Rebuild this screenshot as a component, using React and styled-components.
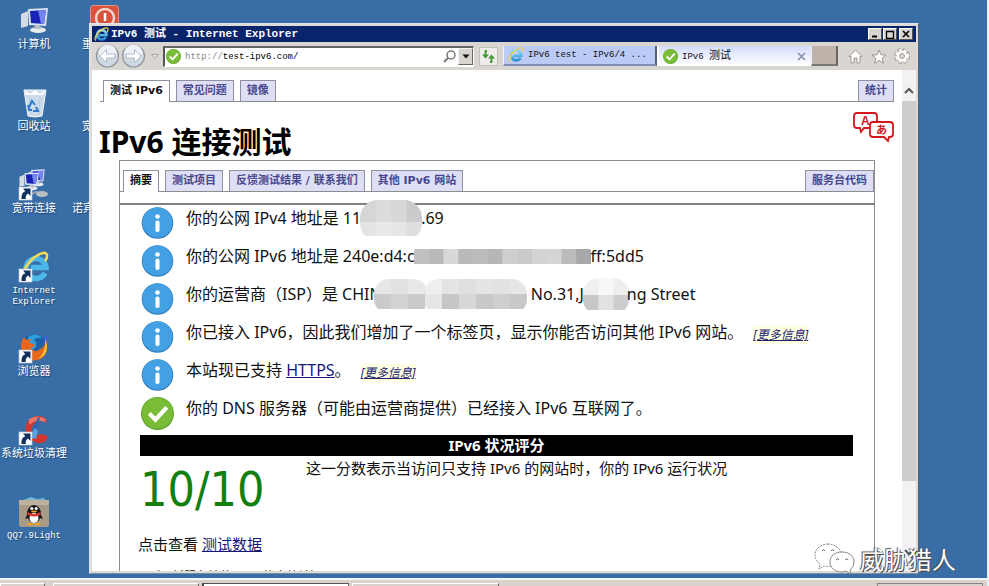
import React from "react";
import styled, { createGlobalStyle, css } from "styled-components";

const sans = '"Noto Sans", "Noto Sans CJK SC", sans-serif';
const tabSans = '"DejaVu Sans", "Noto Sans CJK SC", sans-serif';
const mono = '"Liberation Mono", "Noto Sans CJK SC", monospace';

const GlobalStyle = createGlobalStyle`
  * { box-sizing: border-box; }
  html, body, #root { height: 100%; }
  body { margin: 0; overflow: hidden; font-family: ${sans}; color: #111; }
  button, input { font: inherit; color: inherit; padding: 0; border: 0; }
  button { cursor: default; }
  svg { display: block; flex: none; }
`;

/* ---------- desktop ---------- */

const Screen = styled.div`
  height: 100%;
  display: flex;
  flex-direction: column;
  background: #396da5;
  border-right: 2px solid #e4f4f4;
`;
const Desktop = styled.main`
  position: relative;
  flex: 1;
  min-height: 0;
  display: flex;
  overflow: hidden;
`;
const IconColumn = styled.div`
  width: 68px;
  padding-top: 5px;
  display: flex;
  flex-direction: column;
`;
const Shortcut = styled.button`
  height: 82px;
  background: none;
  color: #fff;
  display: flex;
  flex-direction: column;
  align-items: ${(p) => (p.$left ? "flex-start" : "center")};
  padding-left: ${(p) => p.$left || 0}px;
  gap: 2px;
  white-space: nowrap;
`;
const ShortcutLabel = styled.span`
  font: ${(p) => (p.$latin ? "9px/11px" : "11px/15px")} ${mono};
  padding-top: ${(p) => (p.$latin ? 2 : 0)}px;
  white-space: pre;
  text-align: center;
  text-shadow: 1px 1px 1px #1d4470;
`;
const IconSpace = styled.span`
  height: 31px;
  padding-left: ${(p) => p.$indent || 0}px;
`;

/* ---------- window ---------- */

const Window = styled.section`
  position: absolute;
  inset: 23px 68px 4px 89px;
  display: flex;
  flex-direction: column;
  border: 1px solid #dfe7ef;
  border-right-color: #55606c;
  border-bottom-color: #7d8fa3;
  box-shadow: inset 0 0 0 2px #dedad5;
  padding: 2px;
  background: #fff;
`;
const TitleBar = styled.header`
  height: 16px;
  display: flex;
  align-items: center;
  gap: 2px;
  padding: 0 3px 0 2px;
  background: #08246b;
  color: #fff;
`;
const TitleText = styled.h2`
  flex: 1;
  margin: 0;
  font: bold 11px/16px ${mono};
`;
const WindowButton = styled.button`
  width: 14px;
  height: 12px;
  margin-left: ${(p) => (p.$apart ? 1 : 0)}px;
  background: #d8d4ce;
  border: 1px solid #fff;
  border-right-color: #555;
  border-bottom-color: #555;
  display: grid;
  place-items: center;
`;
const WindowButtons = styled.div`
  display: flex;
  gap: 1px;
`;
const Toolbar = styled.div`
  height: 28px;
  display: flex;
  align-items: center;
  padding: 0 3px 0 2px;
  background: #d9d5d1;
  font: 9px/20px ${mono};
`;
const PlainButton = styled.button`
  background: none;
  width: ${(p) => p.$w}px;
  display: grid;
  place-items: center;
`;
const AddressBox = styled.label`
  flex: 1;
  min-width: 0;
  height: 21px;
  margin: 0 5px 0 0;
  display: flex;
  align-items: center;
  background: #fff;
  border: 1px solid #fff;
  border-top: 2px solid #666;
  border-left: 2px solid #555;
  padding-left: 1px;
  color: #888;
`;
const AddressInput = styled.input`
  flex: 1;
  min-width: 0;
  background: none;
  color: #000;
  outline: 0;
`;
const AddressScheme = styled.span`
  margin-left: 4px;
`;
const DropButton = styled.button`
  width: 15px;
  height: 17px;
  margin-left: 2px;
  background: #d8d4ce;
  border: 1px solid #f4f4f4;
  border-right-color: #666;
  border-bottom-color: #666;
  display: grid;
  place-items: center;
`;
const RefreshButton = styled.button`
  width: 19px;
  height: 19px;
  margin-right: 5px;
  background: #eeedeb;
  border: 1px solid #c4c0bc;
  display: grid;
  place-items: center;
`;
const BrowserTab = styled.button`
  width: 154px;
  height: 20px;
  display: flex;
  align-items: center;
  gap: 4px;
  padding: 0 5px 0 4px;
  text-align: left;
  white-space: pre;
  color: #111;
  ${(p) =>
    p.$active
      ? css`
          background: linear-gradient(#d3dcfc, #eff2ff 60%, #fff);
          border-left: 2px solid #fff;
        `
      : css`
          background: #bccbf6;
          border-left: 1px solid #eef2ff;
          border-right: 2px solid #555e78;
          border-bottom: 2px solid #8090b8;
        `}
`;
const TabName = styled.span`
  flex: 1;
`;
const TabCjk = styled.span`
  font-size: 11px;
`;
const NewTab = styled.button`
  width: 27px;
  height: 20px;
  background: #bdb3ab;
  border-left: 1px solid #eee;
  border-right: 2px solid #666;
  border-bottom: 2px solid #777;
  margin-right: 6px;
`;

const Viewport = styled.div`
  flex: 1;
  min-height: 0;
  display: flex;
`;
const Page = styled.div`
  flex: 1;
  min-width: 0;
  overflow: hidden;
  padding-top: 10px;
`;
const ScrollBar = styled.div`
  width: 14px;
  display: flex;
  flex-direction: column;
  background: #f4f1f4;
`;
const ScrollArrow = styled.button`
  height: ${(p) => p.$h}px;
  background: none;
  display: grid;
  place-items: ${(p) => (p.$down ? "center" : "end center")};
  padding-bottom: ${(p) => (p.$down ? 0 : 7)}px;
`;
const ScrollTrack = styled.div`
  flex: 1;
`;
const ScrollThumb = styled.div`
  height: 88%;
  background: #cecdce;
`;

/* ---------- page ---------- */

const TabRow = styled.nav`
  display: flex;
  gap: 6px;
  padding-left: 3px;
  height: 22px;
  margin: ${(p) => (p.$outer ? "0 8px 0 8px" : "9px 0 0")};
  border-bottom: 1px solid #8d8d8d;
`;
const PageTab = styled.a`
  height: ${(p) => (p.$active ? 22 : 21)}px;
  padding: 0 6px;
  border: 1px solid #8f8fa4;
  border-bottom: 0;
  background: ${(p) => (p.$active ? "#fff" : "#dedef5")};
  color: ${(p) => (p.$active ? "#111" : "#47478f")};
  font: bold 11px/20px ${tabSans};
  text-decoration: none;
  white-space: nowrap;
  margin-left: ${(p) => (p.$end ? "auto" : 0)};
`;
const Heading = styled.div`
  height: 58px;
  padding: 10px 8px 0 7px;
  display: flex;
  justify-content: space-between;
`;
const Title = styled.h1`
  margin: 0;
  padding-top: 12px;
  font: bold 30px/36px ${sans};
  color: #000;
`;
const Panel = styled.section`
  margin: 0 27px;
  min-height: 100%;
  border: 1px solid #8d8d8d;
`;
const Results = styled.ul`
  list-style: none;
  margin: 11px 0 0;
  padding: 2px 0 0 21px;
  border-top: 2px solid #808080;
`;
const Result = styled.li`
  height: 38px;
  display: flex;
  gap: 12px;
`;
const ResultText = styled.span`
  height: 24px;
  display: flex;
  align-items: center;
  font: 16px/24px ${sans};
  white-space: pre;
  margin-top: -1px;
`;
const Link = styled.a`
  color: #17177a;
`;
const MoreLink = styled.a`
  align-self: flex-end;
  margin-left: 10px;
  font: italic 12px/18px ${sans};
  color: #22226e;
  background: #ffffe2;
`;
const ScoreTitle = styled.h3`
  margin: 0 21px 0 20px;
  background: #000;
  color: #fff;
  text-align: center;
  font: bold 15px/21px ${sans};
`;
const ScoreRow = styled.div`
  height: 71px;
  display: flex;
  padding-left: 20px;
`;
const Score = styled.div`
  width: 166px;
  color: #118011;
  font: 48px/66px "DejaVu Sans Condensed", "DejaVu Sans", sans-serif;
`;
const Text = styled.p`
  margin: 0;
  padding: ${(p) => (p.$below ? "6px 0 0 18px" : "1px 0 0")};
  font: 15px/22px ${sans};
`;
const Note = styled.p`
  margin: 13px 0 0 28px;
  font: 12px/18px ${sans};
`;

/* ---------- watermark and taskbar ---------- */

const Watermark = styled.div`
  position: absolute;
  right: 31px;
  bottom: 3px;
  display: flex;
  align-items: center;
  gap: 5px;
  color: #fff;
  font: 24px/30px "Noto Sans CJK SC", sans-serif;
  text-shadow: -1px -1px 1px #555, 1px 1px 0 #444;
`;
const Taskbar = styled.footer`
  height: 8px;
  display: flex;
  gap: 3px;
  padding-top: 3px;
  background: #d8d1cc;
  border-top: 2px solid #f4f7fa;
`;
const Task = styled.button`
  width: ${(p) => p.$w}px;
  margin-right: ${(p) => p.$gap || 0}px;
  background: ${(p) => (p.$active ? "#fff" : "#d8d1cc")};
  border-top: 1px solid ${(p) => (p.$active ? "#555" : "#fff")};
  border-left: ${(p) => (p.$active ? 2 : 1)}px solid ${(p) => (p.$active ? "#444" : "#fff")};
  border-right: 1px solid #666;
`;
const Tray = styled.div`
  width: 106px;
  margin: 0 4px 0 auto;
  border: 1px solid #8a8580;
  border-bottom: 0;
`;

/* ---------- drawings ---------- */

const IeLogo = ({ size }) => (
  <svg width={size} height={size} viewBox="0 0 32 32" aria-hidden="true">
    <defs>
      <linearGradient id="ie" x1="0" y1="0" x2="0" y2="1">
        <stop offset="0" stopColor="#8edcf8" />
        <stop offset="1" stopColor="#2a8fd4" />
      </linearGradient>
    </defs>
    <path d="M25 22 A10 10 0 1 1 26.5 17.5 H11" fill="none" stroke="url(#ie)" strokeWidth="5.5" />
    <path d="M4 29 C-1 25 6 12 16 6 C23 1 31 0 30 6 C29.800 8 29 9.500 28 11" fill="none" stroke="#f1cf45" strokeWidth="2.600" />
    <path d="M5 26 C5 20 10 12 17 8" fill="none" stroke="#fff2a8" strokeWidth="1" />
  </svg>
);

const Arrow = () => (
  <g>
    <rect x="1" y="18" width="13" height="13" fill="#fff" stroke="#b9c6d6" strokeWidth=".7" />
    <path d="M5 19.500h7.500v7.500l-2.400-2.400c-1.900 1-2.700 2.700-2.300 5.300H3.500c-.3-4 .8-6.500 3.800-7.600z" fill="#12315f" />
  </g>
);

const IeShortcut = () => (
  <svg width="32" height="32" viewBox="0 0 32 32" aria-hidden="true">
    <path d="M27 22 A10 10 0 1 1 28 16.500 H13" fill="none" stroke="#4cb8ea" strokeWidth="5.500" />
    <path d="M5 25C6 14 17 4 25 2c5-1 5 4 2 8" fill="none" stroke="#f0d956" strokeWidth="2.600" />
    <Arrow />
  </svg>
);

const Monitor = ({ x = 0, y = 0, s = 1 }) => (
  <g transform={`translate(${x} ${y}) scale(${s})`}>
    <path d="M2 8l7-3v15l-7 2z" fill="#d5dbe2" />
    <path d="M9 3l20-1-2 18-17-1z" fill="#d9e2f2" />
    <path d="M11 5l16-1-2 14-13-1z" fill="#1b23b4" />
    <path d="M19 4.500l8-.5-2 14-3-.2z" fill="#7484ee" />
    <ellipse cx="19" cy="24" rx="8" ry="3" fill="#e8ecef" />
    <path d="M16 19h5l1 4h-7z" fill="#b8c0c8" />
  </g>
);

const Computer = () => (
  <svg width="30" height="31" viewBox="0 0 30 31" aria-hidden="true"><Monitor y={1} /></svg>
);

const RecycleBin = () => (
  <svg width="30" height="31" viewBox="0 0 30 31" aria-hidden="true">
    <path d="M5 3h22l-4 26q-7 2-14 0z" fill="#dce7f1" fillOpacity=".9" stroke="#f4f8fc" />
    <path d="M6 3l5 4 5-4 5 4 5-4-2 5H7z" fill="#fff" />
    <path d="M11 9l1 18M21 9l-1 18" stroke="#b8c9da" />
    <path d="M10 20l3-6 3 4M17 20l2 4h-5M9 18l1 5h3" fill="none" stroke="#2f7ad0" strokeWidth="2" />
  </svg>
);

const Broadband = () => (
  <svg width="32" height="32" viewBox="0 0 32 32" aria-hidden="true">
    <Monitor x={7} y={-1} s={0.68} />
    <Monitor x={0} y={2} s={0.72} />
    <path d="M14 25q6-4 8 0" fill="none" stroke="#9aa6b0" strokeWidth="2" />
    <ellipse cx="24" cy="25" rx="6" ry="3" fill="#b9c0c4" />
    <Arrow />
  </svg>
);

const Firefox = () => (
  <svg width="32" height="32" viewBox="0 0 32 32" aria-hidden="true">
    <circle cx="16" cy="15" r="13" fill="#1f5fa8" />
    <path d="M11 4q8-4 13 2-6-1-8 2 5 4 0 9-6 3-10-2z" fill="#2f9fdb" />
    <path d="M27 7c4 8 2 19-7 21-9 2-17-4-17-13q0-6 3-10l2 3 5-1-2 4q5 0 6 3l-4 2q3 5 8 2c5-3 7-6 6-11z" fill="#e8671d" />
    <path d="M27 7c4 8 2 17-7 20 6-5 8-12 7-20z" fill="#ffc92e" />
    <Arrow />
  </svg>
);

const Cleaner = () => (
  <svg width="32" height="32" viewBox="0 0 32 32" aria-hidden="true">
    <path d="M29 9q-1-8-10-7C10 3 6 11 8 18s9 12 15 11q6-1 7-7l-7-2q-5 3-8-2t3-10l6-1z" fill="#d2362e" />
    <path d="M11 5q8-5 17 0l-1 3q-9-3-16 3z" fill="#ec7468" />
    <path d="M20 3l2 1-4 14-5 3z" fill="#2a65b0" />
    <path d="M17 14l3 3-2 8-7-2z" fill="#5b9fe0" />
    <Arrow />
  </svg>
);

const Penguin = () => (
  <svg width="32" height="31" viewBox="0 0 32 31" aria-hidden="true">
    <path d="M5 4l8-3 6 2 7-1 2 3H5z" fill="#6fb7d2" />
    <rect x="1" y="4" width="30" height="27" rx="2" fill="#a79a87" />
    <path d="M1 4h30v5H1z" fill="#beb29f" />
    <ellipse cx="16" cy="18" rx="7" ry="9" fill="#15151a" />
    <path d="M10 17l-3 6 3-1zM22 17l3 6-3-1z" fill="#15151a" />
    <ellipse cx="16" cy="22" rx="4.500" ry="5" fill="#fff" />
    <path d="M9.500 16q6.500 4 13 0v3q-6 3-13 0z" fill="#d8352b" />
    <circle cx="13.800" cy="12.500" r="1.600" fill="#fff" /><circle cx="18.200" cy="12.500" r="1.600" fill="#fff" />
    <ellipse cx="16" cy="15.500" rx="3" ry="1" fill="#f4a224" />
    <path d="M10 27h5v2h-6zM17 27h5l1 2h-6z" fill="#f4a224" />
  </svg>
);

const Power = () => (
  <svg width="30" height="31" viewBox="0 0 30 31" aria-hidden="true">
    <rect x=".5" y=".5" width="28" height="28" rx="3" fill="#d9523c" stroke="#e99382" />
    <circle cx="15" cy="13" r="9" fill="none" stroke="#f6d5cc" strokeWidth="2.500" />
    <path d="M15 8v8" stroke="#fff" strokeWidth="2.500" />
  </svg>
);

const NavCircle = ({ flip }) => (
  <svg width="25" height="24" viewBox="0 0 25 24" aria-hidden="true">
    <circle cx="12.500" cy="12" r="11" fill="#d0d8e1" stroke="#8d959e" strokeWidth="1.200" />
    <path d="M3 10a9.500 9.500 0 0 1 19 0q-9 4-19 0z" fill="#eef1f5" />
    <path
      d="M11.500 5.500L5 12l6.500 6.500V14H20v-4h-8.500z"
      transform={flip ? "translate(25 0) scale(-1 1)" : undefined}
      fill="#fff" stroke="#a9b8c8" strokeWidth=".9"
    />
  </svg>
);

const Check = ({ size }) => (
  <svg width={size} height={size} viewBox="0 0 32 32" aria-hidden="true">
    <circle cx="16" cy="16" r="16" fill="#62a52c" />
    <circle cx="16" cy="15.500" r="15" fill="#79bd36" />
    <path d="M8 16l6 6 11-12" fill="none" stroke="#fff" strokeWidth="4" />
  </svg>
);

const Info = () => (
  <svg width="33" height="32" viewBox="0 0 32 32" role="img" aria-label="信息">
    <circle cx="16" cy="16" r="15.800" fill="#3584c4" />
    <circle cx="16" cy="15.500" r="15" fill="#42a0e3" />
    <circle cx="16" cy="9.500" r="2.300" fill="#fff" />
    <rect x="14" y="13.500" width="4" height="11.500" rx="1.800" fill="#fff" />
  </svg>
);

const Magnifier = () => (
  <svg width="13" height="13" viewBox="0 0 13 13" aria-hidden="true">
    <circle cx="8" cy="5" r="4" fill="none" stroke="#777" strokeWidth="1.500" />
    <path d="M5 8l-4 4" stroke="#777" strokeWidth="2" />
  </svg>
);

const Refresh = () => (
  <svg width="13" height="13" viewBox="0 0 13 13" aria-hidden="true">
    <path d="M5 1H3.500v4M8 12h1.500V8" fill="none" stroke="#3f9a34" strokeWidth="1.800" />
    <path d="M0 4.500h7L3.500 8.500zM6 8.500h7L9.500 4.500z" fill="#3f9a34" />
  </svg>
);

const Home = () => (
  <svg width="15" height="15" viewBox="0 0 15 15" aria-hidden="true">
    <path d="M7.500 1L14 7.500h-2V14H9V9H6v5H3V7.500H1z" fill="#fff" stroke="#9b9793" />
  </svg>
);
const Star = () => (
  <svg width="16" height="15" viewBox="0 0 16 15" aria-hidden="true">
    <path d="M8 1l1.900 4.700 5.100.4-3.900 3.200 1.300 5L8 11.500l-4.400 2.800 1.300-5L1 6.100l5.100-.4z" fill="#fff" stroke="#9b9793" />
  </svg>
);
const Gear = () => (
  <svg width="16" height="16" viewBox="0 0 16 16" aria-hidden="true">
    <circle cx="8" cy="8" r="6.200" fill="none" stroke="#9b9793" strokeWidth="3.400" strokeDasharray="3 1.870" />
    <circle cx="8" cy="8" r="6" fill="none" stroke="#fff" strokeWidth="2" strokeDasharray="2.500 2.370" />
    <circle cx="8" cy="8" r="4" fill="none" stroke="#fff" strokeWidth="2.500" />
    <circle cx="8" cy="8" r="2.500" fill="#d9d5d1" stroke="#9b9793" strokeWidth=".8" />
  </svg>
);

const Translate = () => (
  <svg width="41" height="31" viewBox="0 0 41 31" role="img" aria-label="语言">
    <g fill="#fff" stroke="#d3181d" strokeWidth="1.800">
      <path d="M4 1h17q3 0 3 3v9q0 3-3 3H11l-3 4-1-4H4q-3 0-3-3V4q0-3 3-3z" />
      <path d="M20 10h17q3 0 3 3v9q0 3-3 3h-1l-1 4-4-4H20q-3 0-3-3v-9q0-3 3-3z" />
    </g>
    <text x="8" y="13" fontFamily="Liberation Sans" fontSize="12" fontWeight="bold" fill="#d3181d">A</text>
    <text x="23" y="22" fontFamily="Noto Sans CJK JP" fontSize="11" fontWeight="bold" fill="#d3181d">あ</text>
  </svg>
);

const Chevron = ({ down }) => (
  <svg width="10" height="7" viewBox="0 0 10 7" aria-hidden="true">
    <path d={down ? "M1 1l4 4 4-4" : "M1 6l4-4 4 4"} fill="none" stroke="#555" strokeWidth="2" />
  </svg>
);

const Caret = ({ color = "#111", hollow }) => (
  <svg width="8" height="5" viewBox="0 0 8 5" aria-hidden="true">
    <path d="M.5.500h7L4 4.500z" fill={hollow ? "#e8e5e2" : color} stroke={hollow ? "#aaa5a0" : "none"} />
  </svg>
);

const WeChat = () => (
  <svg width="41" height="32" viewBox="0 0 41 32" aria-hidden="true">
    <g fill="#fff" stroke="#888" strokeWidth="1" strokeDasharray="2 1">
      <path d="M14 1C7 1 1 6 1 12q0 5 5 9l-1 5 5-3q4 1 8 0 9-2 9-11C27 6 21 1 14 1z" />
      <path d="M28 9c-7 0-12 4-12 10s5 10 12 10l4-1 5 3-1-4q4-3 4-8c0-6-5-10-12-10z" strokeDasharray="none" />
    </g>
    <g fill="none" stroke="#666">
      <path d="M8 8q2-3 3 0M17 8q2-3 3 0M22 17q2-3 3 0M31 17q2-3 3 0" />
    </g>
  </svg>
);

/* Pixelated cover: rows of grey tiles clipped to a rounded outline. */
const Cover = styled.svg`
  margin: 0 ${(p) => p.$after || 0}px 0 ${(p) => p.$before || 0}px;
`;
const Mosaic = ({ id, width, height, pills, rows, split, before, after }) => (
  <Cover width={width} height={height} $before={before} $after={after} aria-hidden="true">
    <clipPath id={id}>
      {pills.map(([x, w, r]) => <rect key={x} x={x} width={w} height={height + 5} rx={r} />)}
    </clipPath>
    <g clipPath={`url(#${id})`}>
      {rows.map((tiles, r) =>
        tiles.map((c, i) => (
          <rect
            key={`${r}-${i}`}
            x={(i * width) / tiles.length}
            y={r ? split : 0}
            width={width / tiles.length + 1}
            height={r ? height - split : split}
            fill={c}
          />
        ))
      )}
    </g>
  </Cover>
);

const shortcuts = [
  ["计算机", Computer],
  ["回收站", RecycleBin],
  ["宽带连接", Broadband],
  ["Internet\nExplorer", IeShortcut, true],
  ["浏览器", Firefox],
  ["系统垃圾清理", Cleaner],
  ["QQ7.9Light", Penguin, true],
];

export default function App() {
  return (
    <Screen>
      <GlobalStyle />
      <Desktop>
        <IconColumn>
          {shortcuts.map(([name, Icon, latin]) => (
            <Shortcut key={name}>
              <IconSpace><Icon /></IconSpace>
              <ShortcutLabel $latin={latin}>{name}</ShortcutLabel>
            </Shortcut>
          ))}
        </IconColumn>
        <IconColumn>
          <Shortcut $left={14}>
            <IconSpace $indent={8}><Power /></IconSpace>
            <ShortcutLabel>重</ShortcutLabel>
          </Shortcut>
          <Shortcut $left={14}>
            <IconSpace />
            <ShortcutLabel>宽</ShortcutLabel>
          </Shortcut>
          <Shortcut $left={4}>
            <IconSpace />
            <ShortcutLabel>诺宾</ShortcutLabel>
          </Shortcut>
        </IconColumn>

        <Window aria-label="Internet Explorer">
          <TitleBar>
            <IeLogo size={15} />
            <TitleText>IPv6 测试 - Internet Explorer</TitleText>
            <WindowButtons>
              <WindowButton aria-label="最小化">
                <svg width="8" height="8"><path d="M1 6.500h5" stroke="#000" strokeWidth="2" /></svg>
              </WindowButton>
              <WindowButton aria-label="最大化">
                <svg width="10" height="9"><path d="M1 1.500h8M1.500 1v7.500h7V1" fill="none" stroke="#000" strokeWidth="1.300" /></svg>
              </WindowButton>
              <WindowButton $apart aria-label="关闭">
                <svg width="8" height="8"><path d="M1 1l6 6M7 1L1 7" stroke="#000" strokeWidth="1.600" /></svg>
              </WindowButton>
            </WindowButtons>
          </TitleBar>

          <Toolbar>
            <PlainButton $w={26} aria-label="后退"><NavCircle /></PlainButton>
            <PlainButton $w={26} aria-label="前进"><NavCircle flip /></PlainButton>
            <PlainButton $w={17} aria-label="历史"><Caret hollow /></PlainButton>
            <AddressBox>
              <Check size={15} />
              <AddressScheme>http://</AddressScheme>
              <AddressInput aria-label="地址" defaultValue="test-ipv6.com/" />
              <Magnifier />
              <DropButton aria-label="展开地址"><Caret /></DropButton>
            </AddressBox>
            <RefreshButton aria-label="刷新"><Refresh /></RefreshButton>
            <BrowserTab>
              <IeLogo size={16} />
              <TabName>IPv6 test - IPv6/4 ...</TabName>
            </BrowserTab>
            <BrowserTab $active>
              <Check size={15} />
              <TabName>IPv6 <TabCjk>测试</TabCjk></TabName>
              <svg width="9" height="9" aria-hidden="true"><path d="M1 1l7 7M8 1L1 8" stroke="#8793b0" strokeWidth="1.700" /></svg>
            </BrowserTab>
            <NewTab aria-label="新建选项卡" />
            <PlainButton $w={23} aria-label="主页"><Home /></PlainButton>
            <PlainButton $w={23} aria-label="收藏夹"><Star /></PlainButton>
            <PlainButton $w={23} aria-label="工具"><Gear /></PlainButton>
          </Toolbar>

          <Viewport>
            <Page>
              <TabRow $outer>
                <PageTab href="#test" $active>测试 IPv6</PageTab>
                <PageTab href="#faq">常见问题</PageTab>
                <PageTab href="#mirrors">镜像</PageTab>
                <PageTab href="#stats" $end>统计</PageTab>
              </TabRow>
              <Heading>
                <Title>IPv6 连接测试</Title>
                <Translate />
              </Heading>
              <Panel>
                <TabRow>
                  <PageTab href="#summary" $active>摘要</PageTab>
                  <PageTab href="#tests">测试项目</PageTab>
                  <PageTab href="#share">反馈测试结果 / 联系我们</PageTab>
                  <PageTab href="#sites">其他 IPv6 网站</PageTab>
                  <PageTab href="#helpdesk" $end>服务台代码</PageTab>
                </TabRow>
                <Results>
                  <Result>
                    <Info />
                    <ResultText>
                      你的公网 IPv4 地址是 11
                      <Mosaic id="m1" width={62} height={36} pills={[[0, 62, 18]]} split={22} before={-1} after={-1}
                        rows={[["#d6d6d8", "#dcdcde", "#d8d8da", "#cbcbcd"], ["#e4e4e6", "#e9e9eb", "#e6e6e8", "#dededf"]]} />
                      .69
                    </ResultText>
                  </Result>
                  <Result>
                    <Info />
                    <ResultText>
                      你的公网 IPv6 地址是 240e:d4:c
                      <Mosaic id="m2" width={177} height={15} pills={[[0, 177, 2]]} split={15} before={-1}
                        rows={[["#c0c0c2", "#bababc", "#d8d8da", "#b9b9bb", "#bcbcbe", "#b6b6b8", "#cfcfd1", "#cacacc", "#d3d3d5", "#d5d5d7", "#bbbbbd", "#a8a8aa"]]} />
                      ff:5dd5
                    </ResultText>
                  </Result>
                  <Result>
                    <Info />
                    <ResultText>
                      你的运营商（ISP）是 CHIN
                      <Mosaic id="m3" width={153} height={30} pills={[[0, 54, 15], [50, 103, 15]]} split={15} before={-8}
                        rows={[["#e6e6e8", "#e2e2e4", "#e8e8ea", "#efeff1", "#e4e4e6", "#dfdfe1", "#e4e4e6", "#e2e2e4", "#e6e6e8"], ["#cbcbcd", "#d2d2d4", "#cbcbcd", "#e6e6e8", "#c6c6c8", "#d8d8da", "#c8c8ca", "#cfcfd1", "#c9c9cb"]]} />
                      {" No.31,J"}
                      <Mosaic id="m4" width={46} height={32} pills={[[0, 46, 16]]} split={17} before={-1} after={-2}
                        rows={[["#f0f0f2", "#f7f7f9", "#eeeef0"], ["#c8c8ca", "#e2e2e4", "#cdcdcf"]]} />
                      ng Street
                    </ResultText>
                  </Result>
                  <Result>
                    <Info />
                    <ResultText>
                      你已接入 IPv6，因此我们增加了一个标签页，显示你能否访问其他 IPv6 网站。
                      <MoreLink href="#more-sites">[更多信息]</MoreLink>
                    </ResultText>
                  </Result>
                  <Result>
                    <Info />
                    <ResultText>
                      {"本站现已支持 "}<Link href="#https">HTTPS</Link>。
                      <MoreLink href="#more-https">[更多信息]</MoreLink>
                    </ResultText>
                  </Result>
                  <Result>
                    <Check size={33} />
                    <ResultText>你的 DNS 服务器（可能由运营商提供）已经接入 IPv6 互联网了。</ResultText>
                  </Result>
                </Results>
                <ScoreTitle>IPv6 状况评分</ScoreTitle>
                <ScoreRow>
                  <Score>10/10</Score>
                  <Text>这一分数表示当访问只支持 IPv6 的网站时，你的 IPv6 运行状况</Text>
                </ScoreRow>
                <Text $below>点击查看 <Link href="#data">测试数据</Link></Text>
                <Note>（更新服务端的 IPv6 状态统计）</Note>
              </Panel>
            </Page>
            <ScrollBar aria-hidden="true">
              <ScrollArrow $h={31} tabIndex={-1}><Chevron /></ScrollArrow>
              <ScrollTrack><ScrollThumb /></ScrollTrack>
              <ScrollArrow $h={38} $down tabIndex={-1}><Chevron down /></ScrollArrow>
            </ScrollBar>
          </Viewport>
        </Window>

        <Watermark><WeChat />威胁猎人</Watermark>
      </Desktop>
      <Taskbar>
        <Task $w={45} $gap={5} aria-label="开始" />
        <Task $w={146} aria-label="任务一" />
        <Task $w={147} $active aria-label="任务二" />
        <Task $w={147} aria-label="任务三" />
        <Tray />
      </Taskbar>
    </Screen>
  );
}
